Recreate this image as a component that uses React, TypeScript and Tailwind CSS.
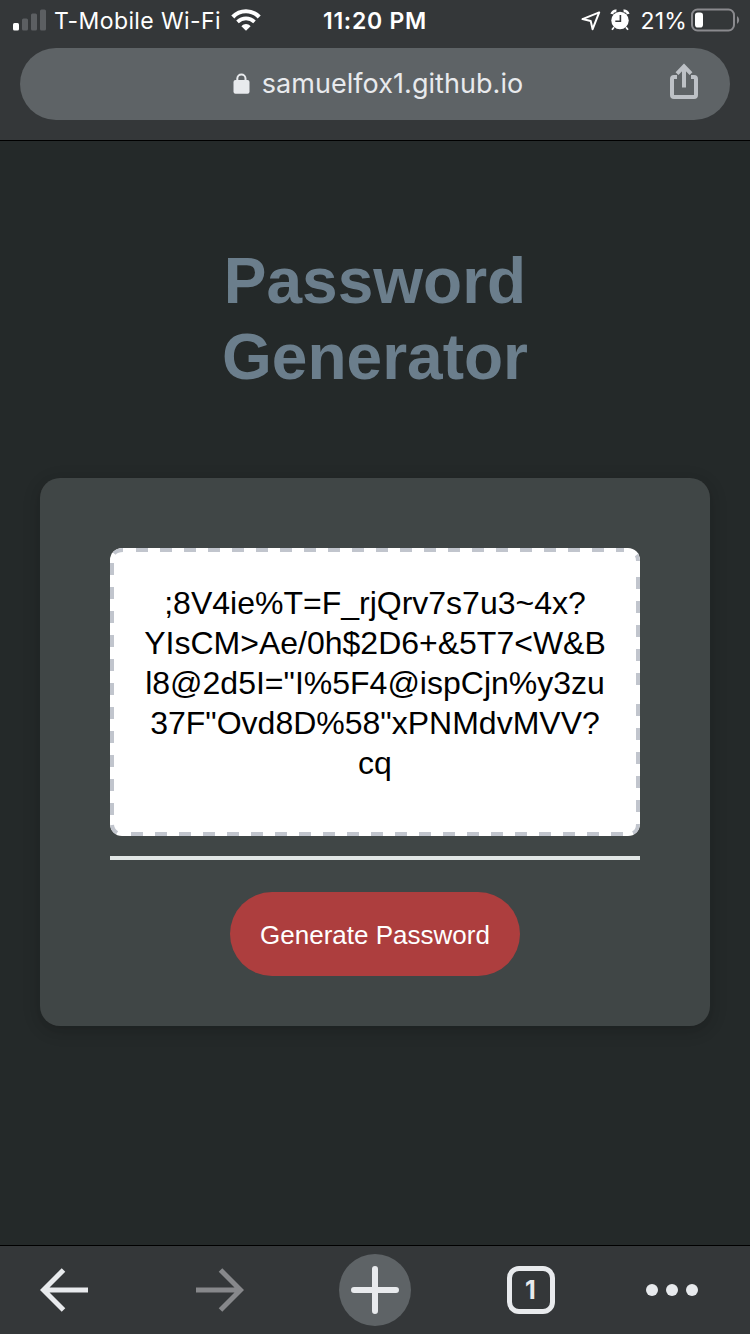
import React from "react";

const passwordLines = [
  ";8V4ie%T=F_rjQrv7s7u3~4x?",
  "YIsCM>Ae/0h$2D6+&5T7<W&B",
  "l8@2d5I=\"I%5F4@ispCjn%y3zu",
  "37F\"Ovd8D%58\"xPNMdvMVV?",
  "cq",
];

function StatusBar() {
  return (
    <div className="grid h-12 grid-cols-[1fr_auto_1fr] items-start text-white">
      <div className="flex h-[41px] items-center pl-[13px]">
        <svg width="33" height="22" viewBox="0 0 33 22" className="mb-[2px] shrink-0">
          <rect x="0" y="14" width="6" height="7.5" rx="1.5" fill="#fff" />
          <rect x="9" y="9.5" width="6" height="12" rx="1.5" fill="#5c5f62" />
          <rect x="18" y="4.5" width="6" height="17" rx="1.5" fill="#5c5f62" />
          <rect x="27" y="0.5" width="6" height="21" rx="1.5" fill="#5c5f62" />
        </svg>
        <span className="ml-[8px] pt-[2px] text-[23px] leading-none tracking-[0.4px] whitespace-nowrap">T-Mobile Wi-Fi</span>
        <svg width="30" height="22" viewBox="0 0 30 22" className="mb-px ml-[10px] shrink-0">
          <path d="M1.8 8 C9 .3 21 .3 28.2 8" fill="none" stroke="#fff" strokeWidth="4.2" />
          <path d="M6.5 12.8 C11.5 8.3 18.5 8.3 23.5 12.8" fill="none" stroke="#fff" strokeWidth="3.8" />
          <path d="M10.4 17.2 C13.1 14.4 16.9 14.4 19.6 17.2 L15 21.8 Z" fill="#fff" />
        </svg>
      </div>
      <span className="flex h-[41px] items-center pt-[2px] text-[23px] leading-none font-semibold tracking-[0.75px] whitespace-nowrap">11:20 PM</span>
      <div className="flex h-[41px] items-center justify-end pr-[10px]">
        <svg width="20" height="20" viewBox="0 0 20 20" className="mr-[9px]">
          <path d="M18.2 1.4 L1.5 8.1 L9.7 9.9 L11.6 18.2 Z" fill="none" stroke="#fff" strokeWidth="2" strokeLinejoin="round" />
        </svg>
        <svg width="20" height="22" viewBox="0 0 20 22" className="mr-[10px] mb-[2px]">
          <circle cx="10" cy="11.5" r="8.7" fill="#fff" />
          <path d="M1.8 5 A4 4 0 0 1 6.4 2 M13.6 2 A4 4 0 0 1 18.2 5" fill="none" stroke="#fff" strokeWidth="2.8" />
          <path d="M4 18.2 L2 20.7 M16 18.2 L18 20.7" stroke="#fff" strokeWidth="1.8" />
          <path d="M10.4 6 V12.2 H5.3" fill="none" stroke="#343739" strokeWidth="1.6" />
        </svg>
        <span className="pt-[2px] text-[23px] leading-none tracking-[0.2px]">21%</span>
        <svg width="49" height="24" viewBox="0 0 49 24" className="mb-[2px] ml-[4px]">
          <rect x="1" y="1.5" width="42" height="21" rx="5.5" fill="none" stroke="#8a8a8e" strokeWidth="2" />
          <rect x="4" y="4.5" width="8" height="15" rx="2.8" fill="#fff" />
          <path d="M46 8 Q48.2 9.4 48.2 12 T46 16 Z" fill="#8a8a8e" />
        </svg>
      </div>
    </div>
  );
}

function AddressBar() {
  return (
    <div className="mx-5 grid h-[72px] grid-cols-[1fr_auto_1fr] items-center rounded-full bg-[#5e6366]">
      <span />
      <div className="flex items-center pb-[2px] pl-[6px]">
        <svg width="17" height="21" viewBox="0 0 17 21" className="mr-3">
          <path d="M4.3 8 V5.5 A4.1 4.1 0 0 1 12.5 5.5 V8" fill="none" stroke="#e8eaed" strokeWidth="2" />
          <rect x=".5" y="7" width="16" height="13.8" rx="2" fill="#e8eaed" />
        </svg>
        <span className="text-[27px] leading-none tracking-[0.05px] whitespace-nowrap text-[#e8eaed]">samuelfox1.github.io</span>
      </div>
      <svg width="30" height="38" viewBox="0 0 30 38" className="mr-[31px] mb-[6px] justify-self-end">
        <path d="M8 15 H5 Q3 15 3 17 V33 Q3 35 5 35 H25 Q27 35 27 33 V17 Q27 15 25 15 H22" fill="none" stroke="#bdc1c6" strokeWidth="4" />
        <path d="M15 25.5 V4 M8 11.6 L15 4.4 L22 11.6" fill="none" stroke="#bdc1c6" strokeWidth="4" />
      </svg>
    </div>
  );
}

function PasswordBox() {
  return (
    <div className="relative h-[288px] overflow-hidden rounded-[12px] bg-white pt-[35px] text-center text-[32px] leading-10 text-black">
      <svg width="530" height="288" viewBox="0 0 530 288" className="absolute inset-0" fill="none" stroke="#c1c5cd" strokeWidth="4">
        <path d="M26 2 H514" strokeDasharray="12 12" />
        <path d="M21 286 H516" strokeDasharray="12 12" />
        <path d="M2 15 V270" strokeDasharray="12 12" />
        <path d="M528 29 V140" strokeDasharray="12 12" />
        <path d="M528 156 V266" strokeDasharray="12 12" />
        <path d="M4 5.5 Q7 2 13 2" />
        <path d="M2 277 Q2.5 282 7 285" />
        <path d="M528 276 Q528 283 523 285.2" />
        <path d="M526.5 7 Q528 9 528 13" />
      </svg>
      {passwordLines.map((line) => (
        <div key={line} className="whitespace-pre">{line}</div>
      ))}
    </div>
  );
}

function Toolbar() {
  return (
    <nav className="grid h-[89px] grid-cols-[128px_183px_128px_183px_128px] items-center border-t border-black bg-[#343739]">
      <svg width="48" height="44" viewBox="0 0 48 44" className="mb-px justify-self-center" fill="none" stroke="#e8eaed" strokeWidth="5">
        <path d="M48 22 H4 M23.5 2 L3.5 22 L23.5 42" />
      </svg>
      <svg width="48" height="44" viewBox="0 0 48 44" className="mb-px justify-self-center" fill="none" stroke="#87888b" strokeWidth="5">
        <path d="M0 22 H44 M24.5 2 L44.5 22 L24.5 42" />
      </svg>
      <div className="flex size-[72px] items-center justify-center justify-self-center rounded-full bg-[#5e6366]">
        <svg width="48" height="48" viewBox="0 0 48 48" stroke="#e8eaed" strokeWidth="6" strokeLinecap="round">
          <path d="M3 24 H45 M24 3 V45" />
        </svg>
      </div>
      <div className="flex size-12 items-center justify-center justify-self-center rounded-[12px] border-[5px] border-[#e8eaed] text-[25px] leading-none font-bold text-[#e8eaed]">1</div>
      <div className="mr-7 flex gap-2 justify-self-center">
        <span className="size-3 rounded-full bg-[#e8eaed]" />
        <span className="size-3 rounded-full bg-[#e8eaed]" />
        <span className="size-3 rounded-full bg-[#e8eaed]" />
      </div>
    </nav>
  );
}

export default function App() {
  return (
    <div className="flex h-[1334px] w-[750px] flex-col overflow-hidden bg-[#242929] font-['Inter',sans-serif]">
      <header className="h-[141px] shrink-0 border-b border-black bg-[#343739]">
        <StatusBar />
        <AddressBar />
      </header>
      <main className="flex grow flex-col px-10 pt-[102px] font-['Liberation_Sans',Arial,sans-serif]">
        <h1 className="text-center text-[64px] leading-[76px] font-bold text-[#6b7e8c]">
          Password
          <br />
          Generator
        </h1>
        <section className="mt-[83px] h-[548px] rounded-[20px] bg-[#404646] px-[70px] pt-[70px] shadow-[0_4px_12px_rgba(0,0,0,0.1),0_4px_20px_rgba(0,0,0,0.1)]">
          <PasswordBox />
          <div className="mt-5 h-1 bg-[#e1e6e5]" />
          <button className="mx-auto mt-8 flex h-[84px] w-[290px] items-center justify-center rounded-full bg-[#ad3e3e] pt-[2px] text-[26px] whitespace-nowrap text-white">
            Generate Password
          </button>
        </section>
      </main>
      <Toolbar />
    </div>
  );
}
